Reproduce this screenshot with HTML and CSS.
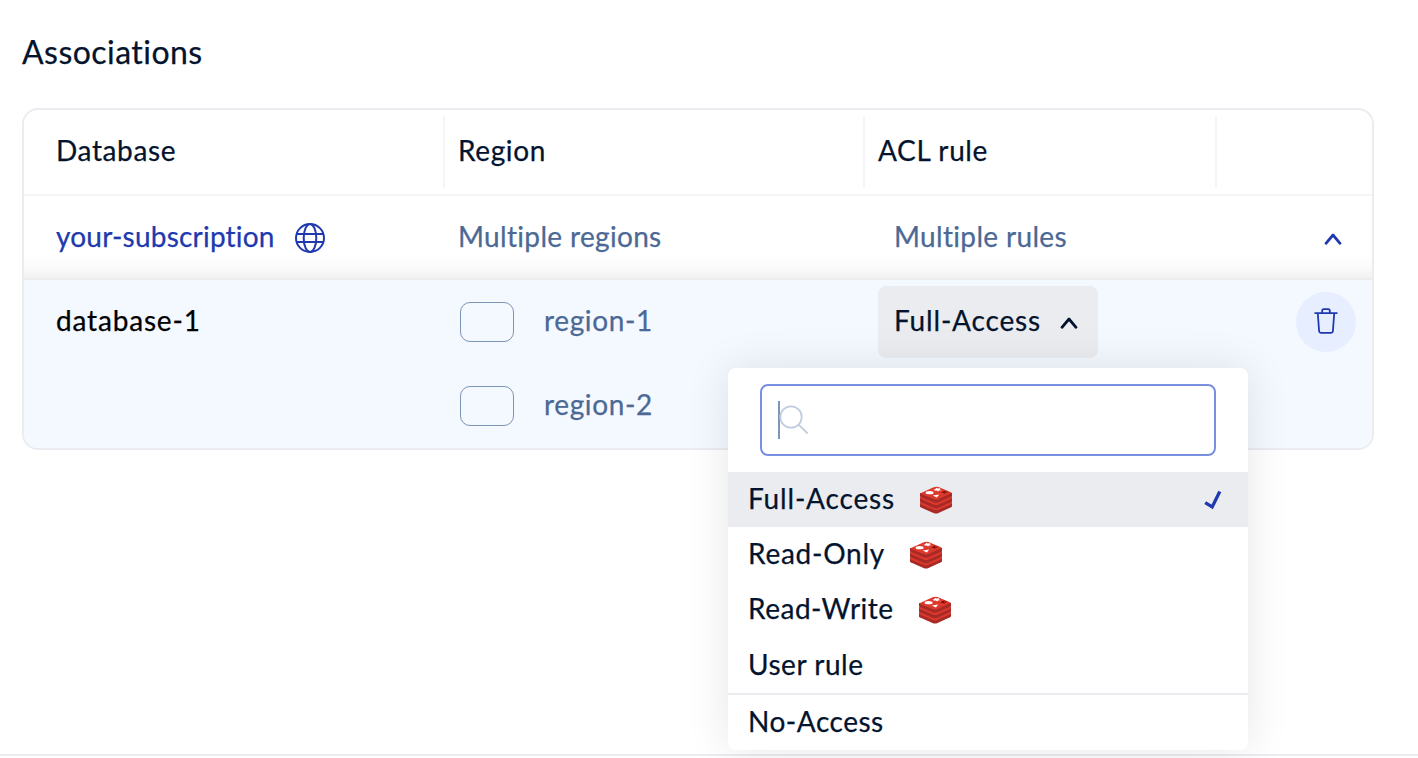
FILE: index.html
```
<!DOCTYPE html>
<html lang="en">
<head>
<meta charset="utf-8">
<title>Associations</title>
<link rel="stylesheet" href="styles.css">
</head>
<body>
<svg class="defs" width="0" height="0" aria-hidden="true">
  <symbol id="redis" viewBox="0 0 32 28">
    <path fill="#b52b27" d="M.3 7h31.400v13H.3z"/>
    <path fill="#a82a26" d="M0 17.500v3q0 .6 1 1.100l12.500 5.300q2.500 1 5 0L31 21.300q1-.5 1-1.100v-3z"/>
    <path fill="#dc382c" d="M.3 16.500v1.700l13.200 5.500q2.500 1 5 0l13.200-5.700v-1.500z"/>
    <path fill="#a82a26" d="M0 12.200v2.900q0 .6 1 1.100l12.500 5.500q2.500 1 5 0L31 16q1-.5 1-1.100v-3z"/>
    <path fill="#dc382c" d="M.3 11v1.800l13.200 5.600q2.500 1 5 0l13.200-5.700V11z"/>
    <path fill="#a82a26" d="M0 7v2.800q0 .6 1 1.100l12.500 5.400q2.500 1 5 0L31 10.800q1-.5 1-1.100V7z"/>
    <path fill="#dc382c" d="M1 7.900q-1-.5 0-1L13.700 1.200q2.500-1 4.800-.1L31 6.300q1 .5 0 1l-12.500 5.700q-2.500 1-5 0z"/>
    <ellipse cx="9.600" cy="6.700" rx="4" ry="1.600" fill="#fff"/>
    <path fill="#fff" d="M13 3.100l2.600-.2.500-1.100 1.600.8 2.700-.5-.8 1.200 2 .9-2.700.2-.7 1.100-1.500-1-2.600.2 1.100-1zM12.700 9.600l6.500-1.200-2.300 3z"/>
    <path fill="#7a0c00" d="M21.500 6.200l3.800-1.700v3.200z"/>
    <path fill="#ad2115" d="M25.300 4.500l3.200 1.400-3.200 1.800z"/>
  </symbol>
  <symbol id="chevron" viewBox="0 0 18 12">
    <path fill="none" stroke="currentColor" stroke-width="2.800" stroke-linecap="round" stroke-linejoin="round" d="M2 10.300L9 2l7 8.300"/>
  </symbol>
</svg>

<h1 class="title"><span>Associations</span></h1>

<main class="card">
  <div class="row head">
    <div class="cell"><span class="t-database">Database</span></div>
    <div class="cell"><span class="t-region">Region</span></div>
    <div class="cell"><span class="t-acl">ACL rule</span></div>
    <div class="cell"></div>
  </div>
  <div class="row subscription">
    <div class="cell link"><span class="t-sub">your-subscription</span>
      <svg class="globe" viewBox="0 0 32 32"><g fill="none" stroke="currentColor" stroke-width="2"><circle cx="16" cy="16" r="14"/><ellipse cx="16" cy="16" rx="6.300" ry="14"/><path d="M3 12h26M3 20h26"/></g></svg>
    </div>
    <div class="cell muted"><span class="t-multi">Multiple regions</span></div>
    <div class="cell muted inset"><span class="t-multi">Multiple rules</span></div>
    <div class="cell end link"><svg class="chevron"><use href="#chevron"/></svg></div>
  </div>
  <div class="row detail">
    <div class="cell name"><span class="t-db1">database-1</span></div>
    <div class="regions">
      <div class="region"><i class="flag"></i><span class="t-region">region-1</span></div>
      <div class="region"><i class="flag"></i><span class="t-region">region-2</span></div>
    </div>
    <div class="acl">
      <button class="select"><span class="t-full">Full-Access</span><svg class="chevron"><use href="#chevron"/></svg></button>
    </div>
    <div class="actions">
      <button class="delete" aria-label="Delete"><svg viewBox="0 0 24 28"><path fill="none" stroke="currentColor" stroke-width="1.800" stroke-linejoin="round" d="M.5 6.200h23M8.200 6V3.700q0-1.600 1.600-1.600h4.400q1.600 0 1.600 1.600V6M3.800 6.500l1.300 17.700q.2 1.700 1.800 1.700h10.200q1.600 0 1.800-1.700L20.200 6.500"/></svg></button>
    </div>
  </div>
</main>

<div class="footer-line"></div>

<div class="menu">
  <div class="search"><i class="caret"></i><svg viewBox="0 0 30 30"><g fill="none" stroke="currentColor" stroke-width="1.800"><circle cx="12" cy="12" r="10.700"/><path d="M19.600 19.600L28.700 28.500"/></g></svg></div>
  <div class="option selected"><span class="t-full">Full-Access</span><svg class="redis"><use href="#redis"/></svg>
    <svg class="check" viewBox="0 0 18 20"><path fill="none" stroke="currentColor" stroke-width="3.300" d="M1.200 12.700L8.200 17 15.800 1.500"/></svg></div>
  <div class="option"><span class="t-ro">Read-Only</span><svg class="redis"><use href="#redis"/></svg></div>
  <div class="option"><span class="t-rw">Read-Write</span><svg class="redis"><use href="#redis"/></svg></div>
  <div class="option user"><span class="t-user">User rule</span></div>
  <div class="option none"><span class="t-none">No-Access</span></div>
</div>
</body>
</html>
```
FILE: styles.css
```
* { box-sizing: border-box; }
body {
  margin: 0;
  height: 758px;
  overflow: hidden;
  position: relative;
  display: flex;
  flex-direction: column;
  background: #fff;
  color: #04142e;
  font: 28px/40px Lato, "Noto Sans", sans-serif;
  font-variant-ligatures: none;
  -webkit-text-stroke: .25px currentColor;
}
span { white-space: nowrap; }
svg { display: block; flex: none; }
.defs { position: absolute; }
button { border: 0; padding: 0; font: inherit; color: inherit; }
.title { margin: 32px 0 36px 22px; font-size: 32px; line-height: 40px; font-weight: 400; letter-spacing: .45px; }
.card {
  width: 1352px;
  height: 342px;
  margin-left: 22px;
  border: 2px solid #ebecf0;
  border-radius: 16px;
  overflow: hidden;
  flex: none;
}
.row { display: grid; grid-template-columns: 421px 420px 352px 155px; }
.cell { display: flex; align-items: center; padding-left: 13px; }
.cell:first-child { padding-left: 32px; }
.head { height: 86px; padding: 6px 0; border-bottom: 2px solid #f4f5f7; }
.head .cell { border-right: 2px solid #f4f5f7; }
.head .cell:last-child { border: 0; }
.subscription {
  height: 84px;
  border-bottom: 2px solid #ebecee;
  background: linear-gradient(#fff 72%, #fafafa 88%, #f1f1f1);
}
.cell span, .region span, .select span, .option span { padding-bottom: 4px; }
.subscription .cell span { padding-bottom: 2px; }
.link { color: #2139ae; }
.muted { color: #4b6994; }
.cell.inset { padding-left: 29px; }
.cell.end { justify-content: flex-end; padding: 4px 30px 0 0; }
.globe { width: 32px; height: 32px; margin: 2px 0 0 19px; }
.chevron { width: 18px; height: 12px; }
.detail { height: 168px; background: #f4f8ff; }
.name { height: 84px; color: #000; }
.regions { display: flex; flex-direction: column; padding-left: 15px; color: #4b6994; }
.region { height: 84px; display: flex; align-items: center; gap: 30px; }
.flag { width: 54px; height: 40px; border: 1px solid #7c95b8; border-radius: 10px; }
.acl { padding: 6px 0 0 13px; }
.select {
  width: 220px;
  height: 72px;
  padding: 0 20px 0 16px;
  display: flex;
  align-items: center;
  justify-content: space-between;
  background: #ebecf0;
  border-radius: 8px;
}
.select .chevron { margin-top: 2px; }
.actions { display: flex; justify-content: flex-end; padding: 12px 16px 0 0; }
.delete {
  width: 60px;
  height: 60px;
  display: grid;
  place-items: center;
  border-radius: 50%;
  background: #e7eeff;
  color: #2139ae;
}
.delete svg { width: 24px; height: 28px; margin-bottom: 2px; }
.footer-line { margin-top: 304px; height: 2px; background: #ebecf0; flex: none; }

.menu {
  position: absolute;
  left: 728px;
  top: 368px;
  width: 520px;
  height: 382px;
  padding-top: 16px;
  background: #fff;
  border-radius: 8px;
  box-shadow: 0 0 44px rgba(0, 0, 0, .1);
  display: flex;
  flex-direction: column;
}
.search {
  width: 456px;
  height: 72px;
  margin: 0 32px 16px;
  padding-left: 16px;
  display: flex;
  align-items: center;
  border: 2px solid #788fe0;
  border-radius: 8px;
  color: #c1cddd;
  flex: none;
}
.caret { width: 2px; height: 38px; background: #7c95b8; }
.search svg { width: 30px; height: 30px; margin-left: -1px; }
.option { height: 55px; display: flex; align-items: center; padding: 0 26px 0 20px; flex: none; }
.selected { background: #ebecf0; }
.redis { width: 32px; height: 28px; margin: 1px 0 0 25px; }
.check { width: 18px; height: 20px; margin: 1px 0 0 auto; color: #2139ae; }
.user { height: 56px; }
.user span { padding-bottom: 2px; }
.none { height: 57px; border-top: 2px solid #ebecf0; border-radius: 0 0 8px 8px; }

.t-database, .t-region { letter-spacing: .62px; }
.t-acl { letter-spacing: .62px; }
.t-rw, .t-user, .t-none { letter-spacing: .52px; }
.t-sub { letter-spacing: .21px; }
.t-multi { letter-spacing: .33px; }
.t-db1 { letter-spacing: .82px; }
.t-full { letter-spacing: .82px; }
.t-ro { letter-spacing: .76px; }
```
